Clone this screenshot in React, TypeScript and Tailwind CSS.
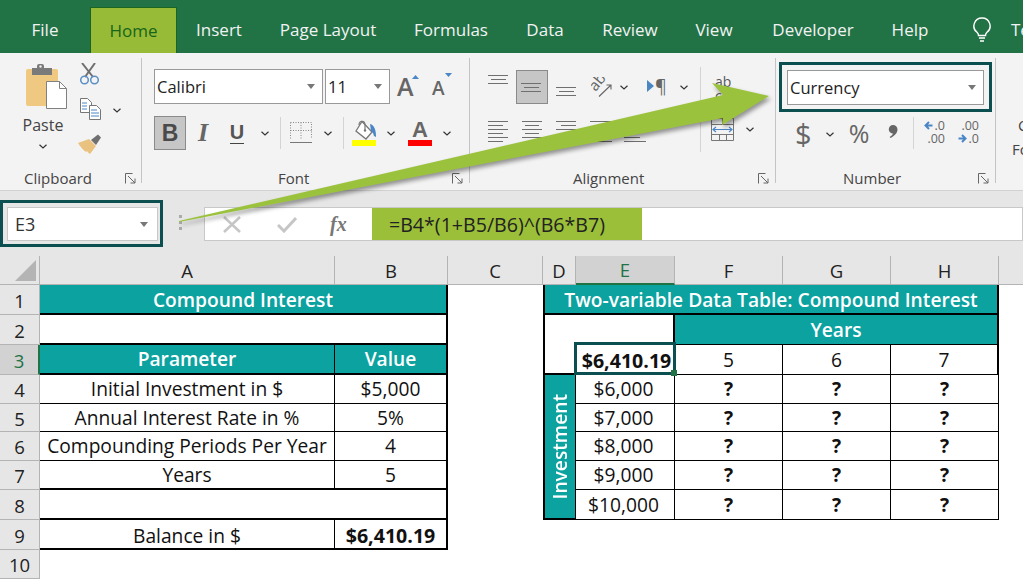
import React from "react";

const Chev = ({ className = "" }: { className?: string }) => (
  <svg width="8" height="5" viewBox="0 0 8 5" className={`shrink-0 ${className}`}>
    <path d="M.5.8L4 4 7.500.8" fill="none" stroke="#333" strokeWidth="1.200" />
  </svg>
);
const Caret = ({ className = "" }: { className?: string }) => (
  <svg width="8" height="5" viewBox="0 0 8 5" className={className}>
    <path d="M0 0h8L4 5z" fill="#777" />
  </svg>
);
const Launcher = ({ className = "" }: { className?: string }) => (
  <svg width="11" height="11" viewBox="0 0 11 11" className={className}>
    <path d="M.5 10.500V.5h7M3 3l7 7M10 5.500V10H5.500" fill="none" stroke="#666" strokeWidth="1" />
  </svg>
);
const Lines = ({ rows, gap = 4 }: { rows: [number, number][]; gap?: number }) => (
  <svg width="22" height={(rows.length - 1) * gap + 1} viewBox={`0 0 22 ${(rows.length - 1) * gap + 1}`} className="block">
    {rows.map(([a, b], i) => (
      <path key={i} d={`M${a} ${i * gap + 0.5}H${b}`} stroke="#6f6f6f" strokeWidth="1" />
    ))}
  </svg>
);

const tabs: [string, string][] = [
  ["File", "w-[90px]"],
  ["Home", "w-[87px]"],
  ["Insert", "w-[84px]"],
  ["Page Layout", "w-[134px]"],
  ["Formulas", "w-[112px]"],
  ["Data", "w-[76px]"],
  ["Review", "w-[94px]"],
  ["View", "w-[74px]"],
  ["Developer", "w-[124px]"],
  ["Help", "w-[70px]"],
];

const TabBar = () => (
  <div className="h-[53px] bg-[#217346] flex items-end text-[17px] text-white shrink-0 overflow-hidden">
    {tabs.map(([t, w]) =>
      t === "Home" ? (
        <div key={t} className={`${w} h-[46px] shrink-0 bg-[#98bb37] border border-b-0 border-[#1a6522] text-[#17651a] flex items-center justify-center`}>
          {t}
        </div>
      ) : (
        <div key={t} className={`${w} h-[46px] shrink-0 flex items-center justify-center text-[#f2f2f2]`}>
          {t}
        </div>
      )
    )}
    <div className="h-[46px] shrink-0 flex items-center pl-[28px] gap-[20px]">
      <svg width="18" height="25" viewBox="0 0 18 25" className="shrink-0 mt-[-1px]">
        <path d="M9 1a8 8 0 0 0-5 14.300c1 .9 1.500 2 1.500 3.200h7c0-1.200.5-2.300 1.500-3.200A8 8 0 0 0 9 1z" fill="none" stroke="#fff" strokeWidth="1.400" />
        <path d="M6 21h6M7 24h4" stroke="#fff" strokeWidth="1.400" />
      </svg>
      <span className="text-[#f2f2f2]">Te</span>
    </div>
  </div>
);

const Sep = () => <div className="w-[1px] h-[125px] bg-[#c4c4c4] self-start mt-[5px] shrink-0" />;
const VSep = ({ className = "" }: { className?: string }) => <div className={`w-[1px] h-[32px] bg-[#d4d4d4] shrink-0 ${className}`} />;
const Label = ({ text, className }: { text: string; className: string }) => (
  <div className={`h-[26px] flex items-center text-[15px] text-[#444] pt-[1px] justify-between ${className}`}>
    <span>{text}</span>
    <Launcher />
  </div>
);

const Clipboard = () => (
  <div className="w-[141px] shrink-0 flex flex-col">
    <div className="h-[112px] flex pt-[10px]">
      <div className="w-[78px] flex flex-col items-center pl-[8px] shrink-0">
        <svg width="41" height="46" viewBox="0 0 41 46" className="ml-[7px] shrink-0">
          <rect x="0" y="6" width="32" height="37" rx="2" fill="#efc981" />
          <path d="M11 3a2 2 0 0 1 2-2h3a2 2 0 0 1 2 2v2h8v7H6V5h5z" fill="#7a7a7a" />
          <circle cx="14.500" cy="3.500" r="1.200" fill="#efefef" />
          <path d="M20.500 18.500h13l7 7v20h-20z" fill="#fff" stroke="#808080" strokeWidth="1" />
          <path d="M33.500 18.500v7h7" fill="none" stroke="#808080" strokeWidth="1" />
        </svg>
        <div className="text-[16px] text-[#444] leading-[20px] mt-[6px]">Paste</div>
        <Chev className="mt-[9px]" />
      </div>
      <div className="flex flex-col">
        <svg width="21" height="22" viewBox="0 0 21 22" className="ml-[1px] shrink-0">
          <path d="M3 0l11 14M16 0L6 14" stroke="#6f6f6f" strokeWidth="2" />
          <circle cx="5.500" cy="17" r="3.800" fill="none" stroke="#5b8fc4" strokeWidth="1.500" />
          <circle cx="15.500" cy="17" r="3.800" fill="none" stroke="#5b8fc4" strokeWidth="1.500" />
        </svg>
        <div className="flex items-center mt-[13px] ml-[2px]">
          <svg width="21" height="22" viewBox="0 0 21 22" className="shrink-0">
            <path d="M.5.5h7l4 4v10H.5z" fill="#fff" stroke="#777" />
            <path d="M9.500 7.500h7l4 4v10h-11z" fill="#fff" stroke="#777" />
            <path d="M2 5h5M2 8h5M2 11h5M11 12h6M11 15h8M11 18h8" stroke="#4a86c5" strokeWidth="1" />
          </svg>
          <Chev className="ml-[12px] mt-[2px]" />
        </div>
        <svg width="24" height="21" viewBox="0 0 24 21" className="mt-[14px] shrink-0">
          <path d="M13 6l7-5.500 3 3L18 11z" fill="#6f6f6f" />
          <path d="M0 9l11-4 7 7-6 8c-2-1-3-3-3-3l-1 1C5 16 2 12 0 9z" fill="#e9c27f" />
        </svg>
      </div>
    </div>
    <Label text="Clipboard" className="pl-[24px] pr-[5px]" />
  </div>
);

const SelectBox = ({ text, w, extra = "" }: { text: string; w: string; extra?: string }) => (
  <div className={`${w} h-[35px] bg-white border border-[#999] flex items-center justify-between pl-[2px] pr-[7px] text-[16.500px] text-[#222] shrink-0 ${extra}`}>
    <span className="pt-[2px]">{text}</span>
    <Caret />
  </div>
);

const FontGroup = () => (
  <div className="w-[327px] shrink-0 flex flex-col">
    <div className="h-[112px] pt-[16px] pl-[12px]">
      <div className="flex items-center">
        <SelectBox text="Calibri" w="w-[169px]" />
        <SelectBox text="11" w="w-[65px]" extra="ml-[2px]" />
        <span className="ml-[7px] relative text-[25px] leading-none font-semibold text-[#666] w-[30px]">
          A
          <svg width="7" height="4" viewBox="0 0 7 4" className="absolute left-[15px] top-[1px]"><path d="M0 4l3.500-4L7 4z" fill="#4a86c5" /></svg>
        </span>
        <span className="ml-[5px] relative text-[19px] leading-none font-semibold text-[#666] w-[24px] pt-[4px]">
          A
          <svg width="7" height="4" viewBox="0 0 7 4" className="absolute left-[13px] top-[-2px]"><path d="M0 0h7L3.500 4z" fill="#4a86c5" /></svg>
        </span>
      </div>
      <div className="flex items-center mt-[12px] h-[34px]">
        <div className="w-[32px] h-[34px] bg-[#c6c6c6] border border-[#8a8a8a] flex items-center justify-center text-[23px] font-bold text-[#4a4a4a] shrink-0 font-['Liberation_Sans']">B</div>
        <div className="w-[34px] text-center text-[26px] leading-[30px] italic font-bold text-[#666] font-['Liberation_Serif'] shrink-0">I</div>
        <div className="w-[34px] flex flex-col items-center shrink-0 font-['Liberation_Sans'] text-[#555] font-bold text-[20px] leading-[18px]">
          <span>U</span>
          <div className="w-[14px] h-[1px] bg-[#444] mt-[2px]" />
        </div>
        <Chev className="ml-[7px]" />
        <VSep className="ml-[11px]" />
        <svg width="22" height="22" viewBox="0 0 22 22" className="ml-[9px] shrink-0">
          <path d="M.5.5h21v16M.5.5v16M11 .5v16M.5 8.500h21" fill="none" stroke="#888" strokeDasharray="1 1.500" />
          <path d="M0 20.500h22" stroke="#777" />
        </svg>
        <Chev className="ml-[12px]" />
        <VSep className="ml-[11px]" />
        <svg width="24" height="26" viewBox="0 0 24 26" className="ml-[8px] shrink-0">
          <path d="M10 1.500L20 12l-6 7-10-8z" fill="#fff" stroke="#777" strokeWidth="1.300" />
          <path d="M7 5c0-5 6-5 6 0v5" fill="none" stroke="#777" strokeWidth="1.200" />
          <circle cx="13" cy="10.500" r="1.200" fill="#777" />
          <path d="M18 4c4 1 6 5 6 13l-2-1-1-3-2-2z" fill="#4a86c5" />
          <rect x="0" y="20" width="24" height="6" fill="#ffff00" />
        </svg>
        <Chev className="ml-[11px]" />
        <div className="ml-[13px] w-[24px] flex flex-col items-center shrink-0">
          <span className="text-[22px] leading-[20px] font-bold text-[#666] font-['Liberation_Sans']">A</span>
          <div className="w-[24px] h-[6px] bg-[#ff0000]" />
        </div>
        <Chev className="ml-[11px]" />
      </div>
    </div>
    <Label text="Font" className="pl-[136px] pr-[6px]" />
  </div>
);

const Alignment = () => (
  <div className="w-[305px] shrink-0 flex flex-col">
    <div className="h-[112px] pt-[17px] pl-[18px] flex items-start">
      <div className="w-[212px] shrink-0">
        <div className="flex items-start h-[34px]">
          <div className="mt-[5px] shrink-0"><Lines rows={[[0, 20], [3, 18], [0, 20]]} /></div>
          <div className="ml-[6px] w-[32px] h-[34px] bg-[#c6c6c6] border border-[#8a8a8a] flex items-center justify-center shrink-0">
            <Lines rows={[[0, 20], [3, 18], [0, 20]]} />
          </div>
          <div className="ml-[8px] mt-[17px] shrink-0"><Lines rows={[[0, 20], [3, 18], [0, 20]]} /></div>
          <svg width="21" height="20" viewBox="0 0 21 20" className="ml-[13px] mt-[7px] shrink-0">
            <text x="0" y="0" fontSize="15" fill="#666" transform="translate(4.500 15) rotate(-50)" fontFamily="Open Sans">ab</text>
            <path d="M8 19.500L20 8M15.500 8H20v4.500" stroke="#666" fill="none" strokeWidth="1.100" />
          </svg>
          <Chev className="ml-[8px] mt-[15px]" />
          <div className="ml-[19px] mt-[8px] flex items-center shrink-0">
            <svg width="7" height="12" viewBox="0 0 7 12" className="shrink-0"><path d="M0 0l7 6-7 6z" fill="#4a86c5" /></svg>
            <span className="text-[18px] leading-[16px] text-[#666] ml-[1px]">¶</span>
          </div>
          <Chev className="ml-[13px] mt-[15px]" />
        </div>
        <div className="flex items-start mt-[17px]">
          <div className="shrink-0"><Lines rows={[[0, 20], [0, 15], [0, 20], [0, 15], [0, 20], [0, 15]]} /></div>
          <div className="ml-[12px] shrink-0"><Lines rows={[[0, 20], [3, 17], [0, 20], [3, 17], [0, 20], [3, 17]]} /></div>
          <div className="ml-[12px] shrink-0"><Lines rows={[[0, 20], [5, 20], [0, 20], [5, 20], [0, 20], [5, 20]]} /></div>
          <div className="ml-[12px] shrink-0"><Lines rows={[[0, 22], [6, 22], [6, 22], [6, 22], [6, 22], [0, 22]]} /></div>
          <div className="ml-[12px] shrink-0"><Lines rows={[[0, 22], [0, 16], [0, 16], [0, 16], [0, 16], [0, 22]]} /></div>
        </div>
      </div>
      <div className="w-[1px] h-[85px] bg-[#d4d4d4] shrink-0 mt-[-3px]" />
      <div className="shrink-0">
        <div className="ml-[14px] h-[34px] text-[14px] leading-[14px] text-[#555] pt-[5px]">ab<br />c</div>
        <div className="flex items-center mt-[14px] ml-[10px]">
          <svg width="23" height="23" viewBox="0 0 23 23" className="shrink-0">
            <path d="M.5.5h22v22H.5zM.5 6.500h22M.5 16.500h22M11.500.5v6M8.500 16.500v6M15.500 16.500v6" fill="none" stroke="#777" strokeWidth="1" />
            <path d="M2 11.500h19M5 9l-3 2.500L5 14M18 9l3 2.500L18 14" fill="none" stroke="#4a86c5" strokeWidth="1.200" />
          </svg>
          <Chev className="ml-[12px]" />
        </div>
      </div>
    </div>
    <Label text="Alignment" className="pl-[103px] pr-[6px]" />
  </div>
);

const Number_ = () => (
  <div className="w-[219px] shrink-0 flex flex-col">
    <div className="h-[112px] pt-[9px] pl-[3px]">
      <div className="w-[213px] h-[50px] border-[3px] border-[#0b4f50] flex items-center justify-center">
        <SelectBox text="Currency" w="w-[197px]" />
      </div>
      <div className="flex items-center mt-[4px] h-[34px] pl-[16px] text-[#666]">
        <span className="w-[14px] text-[29px] leading-none shrink-0 text-center">$</span>
        <Chev className="ml-[17px] mt-[2px]" />
        <span className="ml-[14px] w-[22px] text-[25px] leading-none shrink-0 text-center">%</span>
        <svg width="10" height="13" viewBox="0 0 10 13" className="ml-[18px] shrink-0 mb-[3px]">
          <path d="M5 0a4.500 4.500 0 0 1 4.500 4.500c0 3.500-3 6.500-7 8.500l-.8-1c2-1.300 3-2.500 3.300-3.500A4 4 0 0 1 5 0z" fill="#666" />
        </svg>
        <VSep className="ml-[15px]" />
        <div className="ml-[9px] w-[22px] text-[12.500px] leading-[13px] shrink-0 mb-[3px] text-right">
          <div className="flex items-center justify-end">
            <svg width="9" height="9" viewBox="0 0 9 9" className="mr-[2px] shrink-0"><path d="M8.500 4.500H2M5 1L1.500 4.500 5 8" fill="none" stroke="#4a86c5" strokeWidth="2" /></svg>
            .0
          </div>
          <div>.00</div>
        </div>
        <div className="ml-[12px] w-[22px] text-[12.500px] leading-[13px] shrink-0 mb-[3px] text-right">
          <div>.00</div>
          <div className="flex items-center justify-end">
            <svg width="9" height="9" viewBox="0 0 9 9" className="mr-[2px] shrink-0"><path d="M.5 4.500H7M4 1l3.500 3.500L4 8" fill="none" stroke="#4a86c5" strokeWidth="2" /></svg>
            .0
          </div>
        </div>
      </div>
    </div>
    <Label text="Number" className="pl-[67px] pr-[6px]" />
  </div>
);

const Ribbon = () => (
  <div className="h-[138px] bg-[#f3f3f3] border-b border-[#d2d2d2] flex items-start shrink-0 overflow-hidden">
    <Clipboard /><Sep /><FontGroup /><Sep /><Alignment /><Sep /><Number_ /><Sep />
    <div className="pl-[22px] pt-[60px] text-[15px] leading-[24px] text-[#444] whitespace-nowrap">C<br /><span className="-ml-[6px]">Fo</span></div>
  </div>
);

const FormulaBar = () => (
  <div className="h-[65px] bg-[#e6e6e6] flex items-start shrink-0 pt-[9px]">
    <div className="w-[163px] h-[47px] border-[3px] border-[#0b4f50] pl-[4px] pr-[2px] pt-[4px] shrink-0">
      <div className="h-[34px] bg-white border border-[#c8c8c8] flex items-center justify-between pl-[7px] pr-[9px] text-[18px] text-[#333]">
        <span className="pt-[1px]">E3</span>
        <Caret />
      </div>
    </div>
    <div className="ml-[16px] mt-[15px] flex flex-col gap-[3px] shrink-0">
      <div className="w-[3px] h-[3px] bg-[#aaa]" />
      <div className="w-[3px] h-[3px] bg-[#aaa]" />
      <div className="w-[3px] h-[3px] bg-[#aaa]" />
    </div>
    <div className="ml-[22px] mt-[7px] h-[34px] w-[168px] bg-white border border-[#c8c8c8] border-r-0 flex items-center shrink-0">
      <svg width="18" height="17" viewBox="0 0 18 17" className="ml-[18px] shrink-0"><path d="M1 1l16 15M17 1L1 16" stroke="#c6c6c6" strokeWidth="2.500" /></svg>
      <svg width="20" height="17" viewBox="0 0 20 17" className="ml-[36px] shrink-0"><path d="M1 9l6 6L19 2" fill="none" stroke="#c6c6c6" strokeWidth="3" /></svg>
      <span className="ml-[33px] font-['Liberation_Serif'] italic font-bold text-[20px] text-[#777]">fx</span>
    </div>
    <div className="mt-[7px] h-[34px] flex-1 bg-white border border-l-0 border-[#c8c8c8] flex items-center">
      <div className="w-[270px] h-[32px] bg-[#9bbf38] flex items-center pl-[17px] text-[19.600px] text-[#222] shrink-0 pt-[2px]">=B4*(1+B5/B6)^(B6*B7)</div>
    </div>
  </div>
);

const Head = ({ t, sel }: { t: string; sel?: boolean }) => (
  <div className={`border-r border-[#b4b4b4] flex items-center justify-center text-[18.500px] pt-[1px] ${sel ? "bg-[#d2d2d2] text-[#217346] border-b-[2px] border-b-[#217346]" : "bg-[#e6e6e6] text-[#222] border-b border-b-[#b4b4b4]"}`}>
    {t}
  </div>
);
const Row = ({ n, sel }: { n: number; sel?: boolean }) => (
  <div className={`col-start-1 flex items-center justify-center text-[18.500px] pt-[2px] border-b border-r border-[#b4b4b4] ${sel ? "bg-[#d2d2d2] text-[#217346] border-r-[2px] border-r-[#217346]" : "bg-[#e6e6e6] text-[#222]"}`}>
    {n}
  </div>
);
const C = ({ className = "", children }: { className?: string; children?: React.ReactNode }) => (
  <div className={`flex items-center justify-center text-[19.200px] text-[#111] whitespace-nowrap pt-[1px] ${className}`}>{children}</div>
);

const Sheet = () => (
  <div className="flex-1 min-h-0 grid grid-cols-[40px_295px_113px_95px_33px_99px_108px_108px_108px_24px] grid-rows-[29px_30px_30px_30px_29px_28px_29px_29px_30px_30px_29px] bg-white font-['Open_Sans']">
    <div className="border-r border-b border-[#b4b4b4] bg-[#e6e6e6] flex items-end justify-end pr-[3px] pb-[3px]">
      <svg width="21" height="21" viewBox="0 0 21 21"><path d="M21 0v21H0z" fill="#b4b4b4" /></svg>
    </div>
    {["A", "B", "C", "D"].map(h => <Head key={h} t={h} />)}
    <Head t="E" sel />
    {["F", "G", "H"].map(h => <Head key={h} t={h} />)}
    <div className="bg-[#e6e6e6] border-b border-[#b4b4b4]" />

    <Row n={1} />
    <C className="col-span-2 bg-[#0ba29f] text-white font-semibold border-b-[2px] border-r-[2px] border-black pt-[3px]">Compound Interest</C>
    <div />
    <C className="col-span-5 bg-[#0ba29f] text-white font-semibold border-l-[2px] border-r-[2px] border-b-[2px] border-black pt-[3px]">Two-variable Data Table: Compound Interest</C>
    <div />

    <Row n={2} />
    <C className="col-span-2 border-b-[2px] border-r-[2px] border-black" />
    <div />
    <div className="col-span-2 border-l-[2px] border-r-[2px] border-black" />
    <C className="col-span-3 bg-[#0ba29f] text-white font-semibold border-r-[2px] border-b border-black">Years</C>
    <div />

    <Row n={3} sel />
    <C className="bg-[#0ba29f] text-white font-semibold border-b-[2px] border-r border-black">Parameter</C>
    <C className="bg-[#0ba29f] text-white font-semibold border-b-[2px] border-r-[2px] border-black">Value</C>
    <div />
    <div className="border-l-[2px] border-b-[2px] border-black" />
    <C className="relative font-bold text-[19.600px] pl-[2px]">
      $6,410.19
      <div className="absolute -left-[2px] -top-[3px] -right-[1px] bottom-0 border-[3px] border-[#0b4f50]" />
      <div className="absolute -right-[2px] -bottom-[1px] w-[6px] h-[6px] bg-[#217346]" />
    </C>
    <C className="border-b border-r border-black">5</C>
    <C className="border-b border-r border-black">6</C>
    <C className="border-b border-r-[2px] border-black">7</C>
    <div />

    {([["Initial Investment in $", "$5,000", 4, "$6,000"], ["Annual Interest Rate in %", "5%", 5, "$7,000"], ["Compounding Periods Per Year", "4", 6, "$8,000"], ["Years", "5", 7, "$9,000"]] as [string, string, number, string][]).map(([a, b, n, e], i) => (
      <React.Fragment key={n}>
        <Row n={n} />
        <C className={`border-r border-black ${i === 3 ? "border-b-[2px]" : "border-b"}`}>{a}</C>
        <C className={`border-r-[2px] border-black ${i === 3 ? "border-b-[2px]" : "border-b"}`}>{b}</C>
        <div />
        {i === 0 ? (
          <div className="row-span-5 bg-[#0ba29f] border-2 border-t-0 border-r border-black flex items-center justify-center">
            <span className="[writing-mode:vertical-rl] rotate-180 text-white font-semibold text-[19.200px]">Investment</span>
          </div>
        ) : null}
        <C className="border-b border-r border-black pr-[3px]">{e}</C>
        <C className="border-b border-r border-black font-bold">?</C>
        <C className="border-b border-r border-black font-bold">?</C>
        <C className="border-b border-r border-black font-bold">?</C>
        <div />
      </React.Fragment>
    ))}

    <Row n={8} />
    <C className="col-span-2 border-b-[2px] border-r-[2px] border-black" />
    <div />
    <C className="col-start-6 border-b border-r border-black pr-[3px]">$10,000</C>
    <C className="border-b border-r border-black font-bold">?</C>
    <C className="border-b border-r border-black font-bold">?</C>
    <C className="border-b border-r border-black font-bold">?</C>
    <div />

    <Row n={9} />
    <C className="border-b-[2px] border-r border-black pt-[4px]">Balance in $</C>
    <C className="border-b-[2px] border-r-[2px] border-black font-bold text-[19.600px] pt-[4px]">$6,410.19</C>
    <div className="col-span-7" />

    <Row n={10} />
    <div className="col-span-8" />
  </div>
);

const Arrow = () => (
  <svg width="1023" height="579" viewBox="0 0 1023 579" className="absolute left-0 top-0 pointer-events-none drop-shadow-[2px_3px_2px_rgba(0,0,0,0.4)]">
    <path d="M179 221L723 95L712 83L769 96L722 125L723 118L179 222z" fill="#9bc23c" />
  </svg>
);

export default function App() {
  return (
    <div className="relative w-[1023px] h-[579px] overflow-hidden flex flex-col bg-white font-['Open_Sans']">
      <TabBar />
      <Ribbon />
      <FormulaBar />
      <Sheet />
      <Arrow />
    </div>
  );
}
